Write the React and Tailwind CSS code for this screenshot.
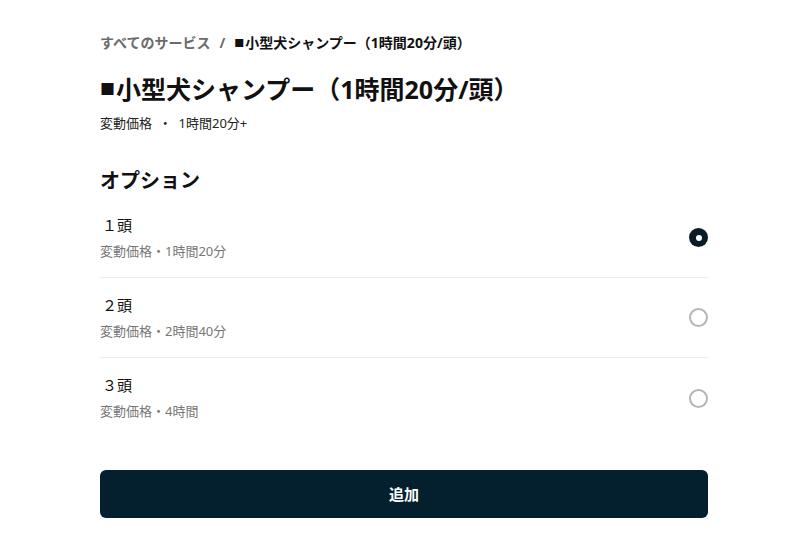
import React from "react";

const font = { fontFamily: '"Noto Sans", "Noto Sans CJK JP", sans-serif' };

const options = [
  { name: "１頭", sub: "変動価格・1時間20分", selected: true },
  { name: "２頭", sub: "変動価格・2時間40分", selected: false },
  { name: "３頭", sub: "変動価格・4時間", selected: false },
];

export default function App() {
  return (
    <div className="w-[800px] h-[550px] bg-white overflow-hidden" style={font}>
      <div className="ml-[100px] w-[608px] pt-[33px]">
        <div className="flex items-center h-[20px] text-[14px] leading-[20px] font-bold">
          <span className="text-[#6b6b6b]">すべてのサービス</span>
          <span className="text-[#6b6b6b] mx-[9px]">/</span>
          <span className="text-[#111] flex items-center">
            <span className="text-[10px] leading-[10px] mr-[1px]">■</span>
            <span>小型犬シャンプー（1時間20分/頭）</span>
          </span>
        </div>
        <h1 className="mt-[19px] h-[34px] flex items-center text-[25px] leading-[34px] font-bold text-[#111]">
          <span className="text-[15px] leading-[15px] mr-[1px]">■</span>
          <span>小型犬シャンプー（1時間20分/頭）</span>
        </h1>
        <div className="mt-[8px] text-[13px] leading-[18px] text-[#222]">
          変動価格&nbsp;&nbsp;・&nbsp;&nbsp;1時間20分+
        </div>
        <h2 className="mt-[35px] text-[20px] leading-[28px] font-bold text-[#111]">オプション</h2>
        <div className="mt-[3px]">
          {options.map((o, i) => (
            <div
              key={i}
              className={`flex items-center justify-between h-[80px] ${i < options.length - 1 ? "border-b border-[#ececec]" : ""}`}
            >
              <div className="self-start mt-[16px] flex flex-col pl-[2px]">
                <span className="text-[15px] leading-[22px] text-[#111]">{o.name}</span>
                <span className="mt-[6px] -ml-[2px] text-[13px] leading-[18px] text-[#777]">{o.sub}</span>
              </div>
              {o.selected ? (
                <div className="w-[19px] h-[19px] rounded-full bg-[#0b1c26] flex items-center justify-center">
                  <div className="w-[6px] h-[6px] rounded-full bg-white" />
                </div>
              ) : (
                <div className="w-[19px] h-[19px] rounded-full border-2 border-[#b5b5b5]" />
              )}
            </div>
          ))}
        </div>
        <button className="mt-[32px] w-full h-[48px] rounded-[6px] bg-[#04202e] text-white text-[15px] font-bold">
          追加
        </button>
      </div>
    </div>
  );
}
